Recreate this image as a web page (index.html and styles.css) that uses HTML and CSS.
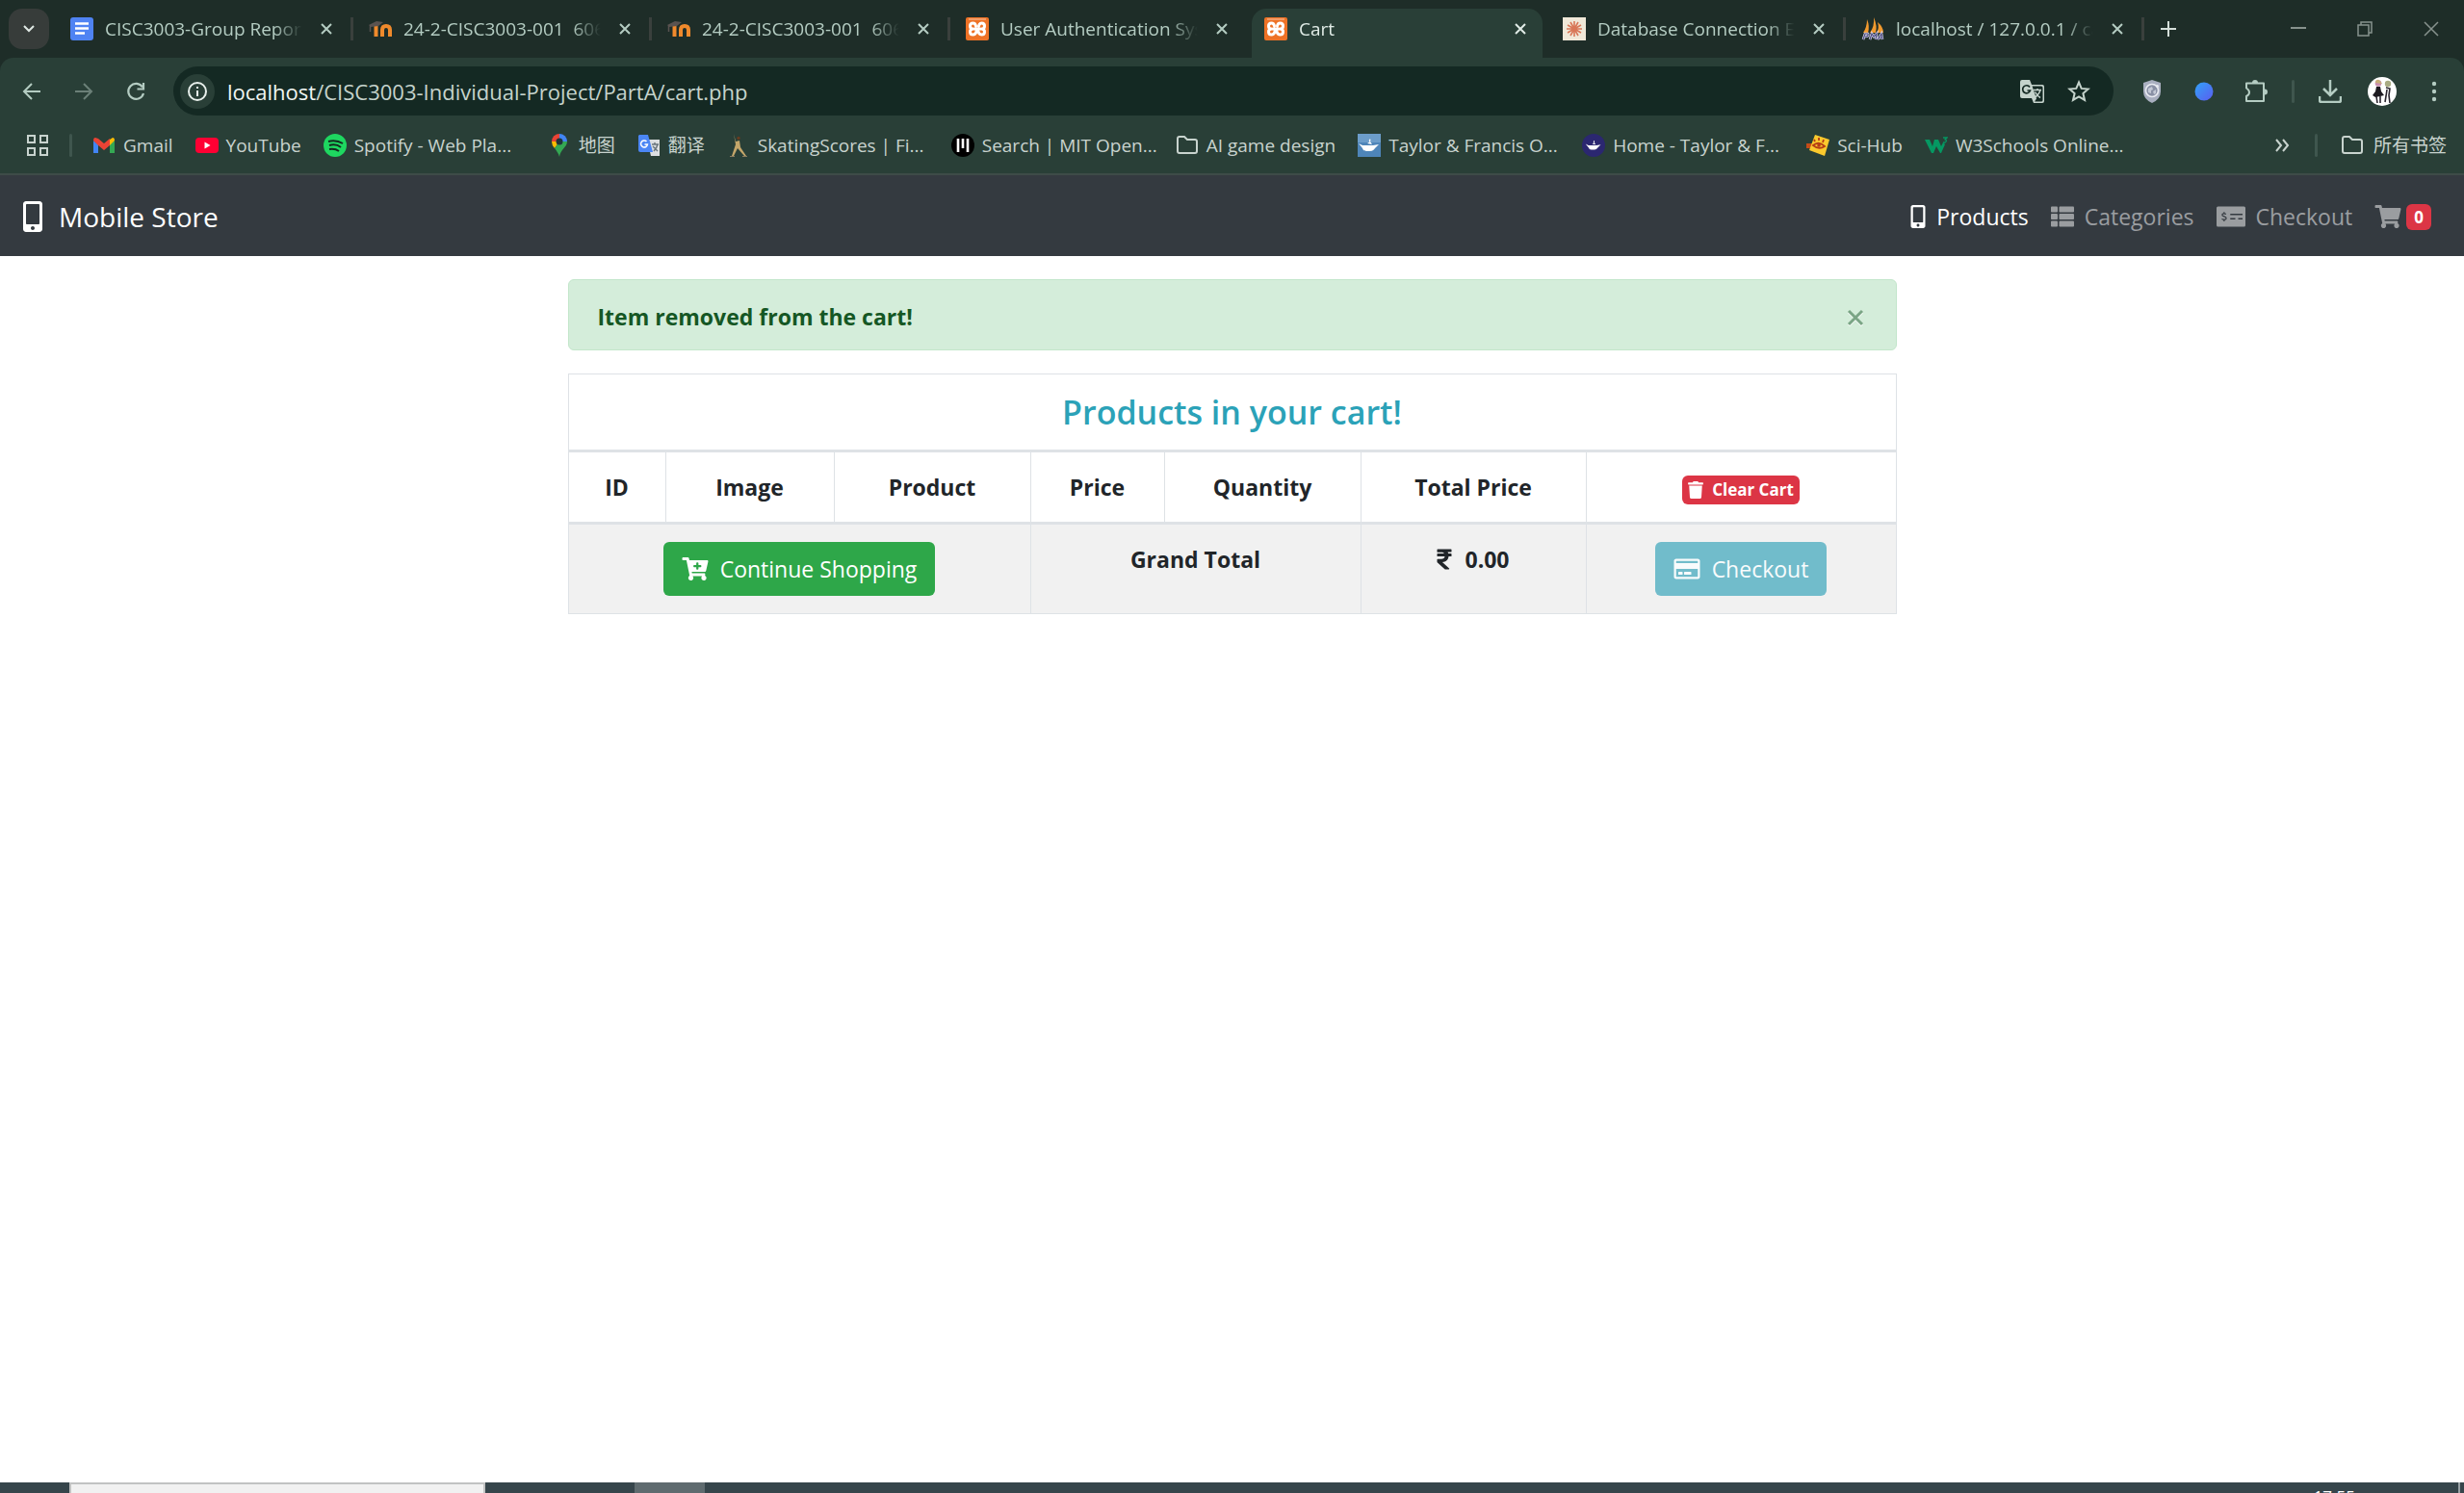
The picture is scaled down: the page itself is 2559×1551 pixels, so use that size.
FILE: index.html
```html
<!DOCTYPE html>
<html lang="en">
<head>
<meta charset="utf-8">
<title>Cart</title>
<link rel="stylesheet" href="styles.css">
</head>
<body>
<svg class="sprite" aria-hidden="true">
  <symbol id="x" viewBox="0 0 14 14"><path d="M2 2l10 10M12 2L2 12" stroke="currentColor" stroke-width="2" fill="none"/></symbol>
  <symbol id="moodle" viewBox="0 0 24 24"><path d="M7.500 20V9M14 20v-7q0-4 4-4t4 4v7" fill="none" stroke="#f08a2c" stroke-width="4"/><path d="M0 8l8-4 7 1-5 4-8 1z" fill="#5a5350"/><path d="M1.500 9v6" stroke="#5a5350" stroke-width="1.500"/></symbol>
  <symbol id="xampp" viewBox="0 0 24 24"><rect width="24" height="24" rx="2" fill="#ee7226"/><path d="M3 2h18" stroke="#fff" stroke-opacity=".6"/><path d="M9 12h6M10.500 9q-.500-3-3-3-3 0-3 3t3 3q-3 0-3 3t3 3q2.500 0 3.500-3 0-2 1-2t1 2q1 3 3.500 3 3 0 3-3t-3-3q3 0 3-3t-3-3q-2.500 0-3 3" fill="none" stroke="#fff" stroke-width="3" stroke-linecap="round" stroke-linejoin="round"/></symbol>
  <symbol id="folder" viewBox="0 0 24 24"><path d="M2 5a2 2 0 0 1 2-2h5l3 3h8a2 2 0 0 1 2 2v10a2 2 0 0 1-2 2H4a2 2 0 0 1-2-2z" fill="none" stroke="currentColor" stroke-width="2"/></symbol>
  <symbol id="mobile" viewBox="0 0 320 512"><path fill="currentColor" d="M272 0H48C21.500 0 0 21.500 0 48v416c0 26.500 21.500 48 48 48h224c26.500 0 48-21.500 48-48V48c0-26.500-21.500-48-48-48zM160 480c-17.700 0-32-14.300-32-32s14.300-32 32-32 32 14.300 32 32-14.300 32-32 32zm112-108c0 6.600-5.400 12-12 12H60c-6.600 0-12-5.400-12-12V60c0-6.600 5.400-12 12-12h200c6.600 0 12 5.400 12 12v312z"/></symbol>
  <symbol id="lamp" viewBox="0 0 24 24"><path d="M1 10l4 2h11l6-1-4 4c-2 3-4 3-7 3s-5 0-6-3zM10 10l3-2 2 3zM12 8q-1-1 1-3 1 2 0 3" fill="#fff"/></symbol>
</svg>

<header class="browser">
  <div class="tabstrip">
    <button class="tab-search" aria-label="Search tabs"><svg width="14" height="14" viewBox="0 0 14 14"><path d="M2 4l5 5 5-5" fill="none" stroke="#dfe8e4" stroke-width="2"/></svg></button>
    <div class="tab">
      <svg class="fav" viewBox="0 0 24 24"><rect width="24" height="24" rx="3" fill="#4f83f3"/><path d="M5 6.500h14M5 11.500h14M5 16.500h10" stroke="#fff" stroke-width="2.500"/></svg>
      <span class="tab-title">CISC3003-Group Report</span><button class="close" aria-label="Close tab"><svg><use href="#x"/></svg></button>
    </div>
    <div class="tab">
      <svg class="fav"><use href="#moodle"/></svg>
      <span class="tab-title">24-2-CISC3003-001&nbsp; 606</span><button class="close" aria-label="Close tab"><svg><use href="#x"/></svg></button>
    </div>
    <div class="tab">
      <svg class="fav"><use href="#moodle"/></svg>
      <span class="tab-title">24-2-CISC3003-001&nbsp; 606</span><button class="close" aria-label="Close tab"><svg><use href="#x"/></svg></button>
    </div>
    <div class="tab no-line">
      <svg class="fav"><use href="#xampp"/></svg>
      <span class="tab-title">User Authentication Sys</span><button class="close" aria-label="Close tab"><svg><use href="#x"/></svg></button>
    </div>
    <div class="tab no-line active">
      <svg class="fav"><use href="#xampp"/></svg>
      <span class="tab-title">Cart</span><button class="close" aria-label="Close tab"><svg><use href="#x"/></svg></button>
    </div>
    <div class="tab">
      <svg class="fav" viewBox="0 0 24 24"><rect width="24" height="24" fill="#f0e8d8"/><path d="M12 4v16M5 8l14 8M5 16l14-8M8 5l8 14M16 5L8 19M4 12h16" stroke="#d97757" stroke-width="1.600"/></svg>
      <span class="tab-title">Database Connection Er</span><button class="close" aria-label="Close tab"><svg><use href="#x"/></svg></button>
    </div>
    <div class="tab">
      <svg class="fav" viewBox="0 0 24 24"><path d="M2 16Q6 10 6 2q3 7 1 14zM9 16q5-7 4-16 4 9 2 16zM16 16q3-5 1-11 6 5 6 11z" fill="#f29a2e"/><path d="M2 23l2-6h3q1 3-3 3M9 23l2-6 2 3 3-3-1 6M17 23l4-6 1 6M18 21h4" fill="none" stroke="#d9d8ee" stroke-width="2.600"/><path d="M2 23l2-6h3q1 3-3 3M9 23l2-6 2 3 3-3-1 6M17 23l4-6 1 6M18 21h4" fill="none" stroke="#4b4a80" stroke-width="1.200"/></svg>
      <span class="tab-title">localhost / 127.0.0.1 / ca</span><button class="close" aria-label="Close tab"><svg><use href="#x"/></svg></button>
    </div>
    <button class="new-tab" aria-label="New tab"><svg width="16" height="16" viewBox="0 0 16 16"><path d="M8 0v16M0 8h16" stroke="#d5dfda" stroke-width="2"/></svg></button>
    <div class="window-controls">
      <button aria-label="Minimize"><svg viewBox="0 0 16 16"><path d="M0 7h16" stroke="currentColor" stroke-width="2"/></svg></button>
      <button aria-label="Restore"><svg viewBox="0 0 16 16"><path d="M1 4h11v11H1zM4 4V1h11v11h-3" fill="none" stroke="currentColor" stroke-width="1.500"/></svg></button>
      <button aria-label="Close"><svg viewBox="0 0 16 16"><path d="M1 1l14 14M15 1L1 15" stroke="currentColor" stroke-width="1.500"/></svg></button>
    </div>
  </div>

  <div class="panel">
    <div class="toolbar">
      <button class="tool" aria-label="Back"><svg viewBox="0 0 24 24"><path d="M21 12H4M12 4l-8 8 8 8" fill="none" stroke="currentColor" stroke-width="2"/></svg></button>
      <button class="tool dim" aria-label="Forward"><svg viewBox="0 0 24 24"><path d="M3 12h17M12 4l8 8-8 8" fill="none" stroke="currentColor" stroke-width="2"/></svg></button>
      <button class="tool" aria-label="Reload"><svg viewBox="0 0 24 24"><path d="M19 7.500A8 8 0 1 0 20 14M20 3v6.500h-6.500" fill="none" stroke="currentColor" stroke-width="2.200"/></svg></button>
      <div class="omnibox">
        <button class="site-info" aria-label="Site information"><svg width="20" height="20" viewBox="0 0 20 20"><circle cx="10" cy="10" r="9" fill="none" stroke="currentColor" stroke-width="2"/><path d="M10 9v6M10 5v2" stroke="currentColor" stroke-width="2"/></svg></button>
        <div class="url"><b>localhost</b>/CISC3003-Individual-Project/PartA/cart.php</div>
        <button class="in-box" aria-label="Translate this page"><svg width="26" height="26" viewBox="0 0 26 26"><path d="M2 1h8l2 5h11a2 2 0 0 1 2 2v15a2 2 0 0 1-2 2h-9l-2-5H2a2 2 0 0 1-2-2V3a2 2 0 0 1 2-2z" fill="#c5d3cc"/><path d="M12.500 7.500H22a1.500 1.500 0 0 1 1.500 1.500v13a1.500 1.500 0 0 1-1.500 1.500h-7l2-3z" fill="#142923"/><path d="M10 8.500A4 4 0 1 0 10.500 12H7.500" fill="none" stroke="#142923" stroke-width="1.700"/><path d="M14 11.500h8M18 10v1.500M21 11.500q-1.500 5-6 8M15.500 13.500q2 4 5.500 6" fill="none" stroke="#c5d3cc" stroke-width="1.500"/></svg></button>
        <button class="in-box" aria-label="Bookmark this tab"><svg width="24" height="24" viewBox="0 0 24 24"><path d="M12 2.500l2.700 6.400 6.900.6-5.200 4.600 1.600 6.800-6-3.600-6 3.600 1.600-6.800-5.200-4.600 6.900-.6z" fill="none" stroke="#c5d3cc" stroke-width="2"/></svg></button>
      </div>
      <div class="extensions">
        <button class="tool" aria-label="Shield extension"><svg viewBox="0 0 24 24"><path d="M12 0l9 3v9q0 8-9 12-9-4-9-12V3z" fill="#a9afc0"/><circle cx="12" cy="11" r="6.500" fill="#8990a5" stroke="#e9ebf1" stroke-width="1.600"/><path d="M8 9l4-2 1 3-2 1v3l-3-1zM13 12l3-2v4l-2 1z" fill="#c3c8d5"/><circle cx="17.500" cy="6.500" r="1.500" fill="#e9ebf1"/></svg></button>
        <button class="tool" aria-label="Blue extension"><svg viewBox="0 0 24 24"><defs><linearGradient id="orb" x1="0" y1="0" x2="1" y2="1"><stop stop-color="#31a2f8"/><stop offset="1" stop-color="#5b5df0"/></linearGradient></defs><circle cx="12" cy="12" r="9.500" fill="url(#orb)"/></svg></button>
        <button class="tool" aria-label="Extensions"><svg viewBox="0 0 24 24"><path d="M2 3.500h18V22H2v-5q3-1.500 3-4T2 8.500z" fill="none" stroke="currentColor" stroke-width="2" stroke-linejoin="round"/><path d="M8 3a3 3 0 0 1 6 0zM21 9.500a3 3 0 0 1 0 6z" fill="currentColor"/></svg></button>
        <span class="rule"></span>
        <button class="tool" aria-label="Downloads"><svg viewBox="0 0 24 24"><path d="M12 0v15M5 9l7 7 7-7M1 17v4q0 2 2 2h18q2 0 2-2v-4" fill="none" stroke="currentColor" stroke-width="2.500"/></svg></button>
        <button class="tool avatar" aria-label="Profile"><svg viewBox="0 0 30 30"><circle cx="15" cy="15" r="15" fill="#fff"/><circle cx="11" cy="6.500" r="3.300" fill="#c98fb0"/><path d="M8 6q0-4 4-3l3 4" fill="#c9b07a"/><circle cx="21" cy="7" r="3.200" fill="#a9ab83"/><path d="M9 10h4l1 5 3 4-4 1-5 1-3-2 3-4z" fill="#1d1a20"/><path d="M9 20l1 7M13 20v7M19 11l4 1-1 7 1 8M20 13l-1 7-1 6" fill="none" stroke="#29242e" stroke-width="1.600"/></svg></button>
        <button class="tool" aria-label="Menu"><svg viewBox="0 0 24 24"><g fill="currentColor"><circle cx="12" cy="4" r="2.200"/><circle cx="12" cy="12" r="2.200"/><circle cx="12" cy="20" r="2.200"/></g></svg></button>
      </div>
    </div>

    <nav class="bookmarks" aria-label="Bookmarks">
      <button class="apps" aria-label="Apps"><svg width="24" height="24" viewBox="0 0 24 24"><path d="M2 2h7v7H2zM15 2h7v7h-7zM2 15h7v7H2zM15 15h7v7h-7z" fill="none" stroke="currentColor" stroke-width="2"/></svg></button>
      <span class="rule"></span>
      <a href="#"><svg viewBox="0 0 24 24"><path d="M1 7v13h5V11z" fill="#4285f4"/><path d="M23 7v13h-5V11z" fill="#34a853"/><path d="M18 6l3-2q2 0 2 3l-5 5z" fill="#fbbc04"/><path d="M1 7q0-3 2-3l3 1 6 5 6-5v7l-6 5-6-5z" fill="#ea4335"/></svg><span>Gmail</span></a>
      <a href="#"><svg viewBox="0 0 24 24"><rect y="4" width="24" height="16" rx="4" fill="#ff0033"/><path d="M9.500 8.500v7l6-3.500z" fill="#fff"/></svg><span>YouTube</span></a>
      <a href="#"><svg viewBox="0 0 24 24"><circle cx="12" cy="12" r="12" fill="#1ed760"/><path d="M5 8q8-2 15 2M6 12q7-2 12 2M6 16q6-1 10 2" fill="none" stroke="#14291f" stroke-width="2"/></svg><span class="long">Spotify - Web Pla...</span></a>
      <a href="#"><svg viewBox="0 0 24 24"><path d="M12 0a8 8 0 0 0-8 8h8z" fill="#ea4335"/><path d="M12 0a8 8 0 0 1 8 8h-8z" fill="#4285f4"/><path d="M4 8q0 4 3 7l5-7z" fill="#fbbc04"/><path d="M20 8c0 6-7 8-8 16-1-4-3-6-5-9l5-7z" fill="#34a853"/><circle cx="12" cy="8" r="3.500" fill="#20353b"/></svg><span>地图</span></a>
      <a href="#"><svg viewBox="0 0 24 24"><path d="M10 6h13v17H14z" fill="#dcdfe1"/><path d="M2 1h9l5 18H3q-2 0-2-2V2z" fill="#4b86f4"/><path d="M9.500 8A3.500 3.500 0 1 0 10.500 11H7.500" fill="none" stroke="#fff" stroke-width="1.500"/><path d="M15 11h7M18 9v2M21 11q-1 4-4 7M16 13l5 5" fill="none" stroke="#68757c" stroke-width="1.400"/></svg><span>翻译</span></a>
      <a href="#"><svg viewBox="0 0 24 24"><path d="M7 0l2 8 4-1 1 7 6 9-2 0-7-8-4 8-2 0 4-12z" fill="#c4a66a"/><circle cx="12" cy="4.500" r="1.700" fill="#673c20"/><path d="M3 23.500h5M16 23.500h5" stroke="#8b7c60" stroke-width="1.200"/></svg><span class="long">SkatingScores | Fi...</span></a>
      <a href="#"><svg viewBox="0 0 24 24"><circle cx="12" cy="12" r="12" fill="#000"/><path d="M7 5v14M12 5v10M17 5v14" stroke="#fff" stroke-width="2.600"/></svg><span class="long">Search | MIT Open...</span></a>
      <a href="#"><svg><use href="#folder"/></svg><span>AI game design</span></a>
      <a href="#"><svg viewBox="0 0 24 24"><path d="M0 0h24v24H0z" fill="#4e85b9"/><path d="M0 0h24v9H0z" fill="#6c9dca"/><use href="#lamp"/></svg><span class="long">Taylor &amp; Francis O...</span></a>
      <a href="#"><svg viewBox="0 0 24 24"><circle cx="12" cy="12" r="12" fill="#2b2770"/><use href="#lamp" x="3" y="3" width="18" height="18"/></svg><span class="long">Home - Taylor &amp; F...</span></a>
      <a href="#"><svg viewBox="0 0 24 24"><path d="M0 10h6v5H0z" fill="#c44c18"/><path d="M9 1l15 5-5 17-16-6z" fill="#fbc92d"/><path d="M7 12q6-5 12 1-6 4-12-1zM9 8l-1-2M13 7V4M17 9l1-3" fill="none" stroke="#b43c16" stroke-width="1.800"/><circle cx="13" cy="12" r="1.800" fill="#b43c16"/></svg><span>Sci-Hub</span></a>
      <a href="#"><svg viewBox="0 0 24 24"><path d="M0 6h5l3 7 2-7h4l3 7 2-4 2 2-4 9h-1l-4-7-3 7H7z" fill="#059862"/><path d="M19 4h4l-2 2q3 1 0 3h-2" fill="none" stroke="#059862" stroke-width="1.300"/></svg><span class="long">W3Schools Online...</span></a>
      <div class="bookmarks-end">
        <button aria-label="More bookmarks"><svg width="16" height="16" viewBox="0 0 16 16"><path d="M2 2l5 6-5 6M9 2l5 6-5 6" fill="none" stroke="currentColor" stroke-width="2"/></svg></button>
        <span class="rule"></span>
        <a href="#"><svg><use href="#folder"/></svg><span>所有书签</span></a>
      </div>
    </nav>
  </div>
</header>

<nav class="navbar" aria-label="Main">
  <a class="brand" href="#"><svg width="20" height="32"><use href="#mobile"/></svg>Mobile Store</a>
  <ul class="nav-links">
    <li><a class="current" href="#"><svg width="16" height="24"><use href="#mobile"/></svg>Products</a></li>
    <li><a href="#"><svg width="24" height="24" viewBox="0 0 512 512"><path fill="currentColor" d="M149.333 216v80c0 13.255-10.745 24-24 24H24c-13.255 0-24-10.745-24-24v-80c0-13.255 10.745-24 24-24h101.333c13.255 0 24 10.745 24 24zM0 376v80c0 13.255 10.745 24 24 24h101.333c13.255 0 24-10.745 24-24v-80c0-13.255-10.745-24-24-24H24c-13.255 0-24 10.745-24 24zM125.333 32H24C10.745 32 0 42.745 0 56v80c0 13.255 10.745 24 24 24h101.333c13.255 0 24-10.745 24-24V56c0-13.255-10.745-24-24-24zm80 448H488c13.255 0 24-10.745 24-24v-80c0-13.255-10.745-24-24-24H205.333c-13.255 0-24 10.745-24 24v80c0 13.255 10.745 24 24 24zm-24-424v80c0 13.255 10.745 24 24 24H488c13.255 0 24-10.745 24-24V56c0-13.255-10.745-24-24-24H205.333c-13.255 0-24 10.745-24 24zm24 264H488c13.255 0 24-10.745 24-24v-80c0-13.255-10.745-24-24-24H205.333c-13.255 0-24 10.745-24 24v80c0 13.255 10.745 24 24 24z"/></svg>Categories</a></li>
    <li><a href="#"><svg width="30" height="24" viewBox="0 0 640 512"><rect y="32" width="640" height="448" rx="32" fill="currentColor"/><path d="M304 208h272M304 304h112M480 304h96" stroke="#343a40" stroke-width="32"/><path d="M208 204c-14-20-84-22-84 14 0 46 92 24 92 74 0 42-80 38-98 12M168 152v40M168 320v40" fill="none" stroke="#343a40" stroke-width="26"/></svg>Checkout</a></li>
    <li><a class="cart-link" href="#" aria-label="Cart"><svg width="28" height="24" viewBox="0 0 576 512"><path fill="currentColor" d="M528.12 301.319l47.273-208C578.806 78.301 567.391 64 551.99 64H159.208l-9.166-44.81C147.758 8.021 137.93 0 126.529 0H24C10.745 0 0 10.745 0 24v16c0 13.255 10.745 24 24 24h69.883l70.248 343.435C147.325 417.1 136 435.222 136 456c0 30.928 25.072 56 56 56s56-25.072 56-56c0-15.674-6.447-29.835-16.824-40h209.647C430.447 426.165 424 440.326 424 456c0 30.928 25.072 56 56 56s56-25.072 56-56c0-22.172-12.888-41.332-31.579-50.405l5.517-24.276c3.413-15.018-8.002-29.319-23.403-29.319H218.117l-6.545-32h293.145c11.206 0 20.92-7.754 23.403-18.681z"/></svg><span class="count">0</span></a></li>
  </ul>
</nav>

<main class="container">
  <div class="alert" role="alert"><strong>Item removed from the cart!</strong><button class="dismiss" aria-label="Dismiss"><svg width="18" height="18" viewBox="0 0 18 18"><path d="M2 3l14 14M16 3L2 17" stroke="#fff" stroke-width="3"/><path d="M2 2l14 14M16 2L2 16" stroke="currentColor" stroke-width="3"/></svg></button></div>
  <table class="cart">
    <colgroup><col class="c-id"><col class="c-image"><col class="c-product"><col class="c-price"><col class="c-qty"><col class="c-total"><col></colgroup>
    <thead>
      <tr><td class="title-cell" colspan="7"><h1>Products in your cart!</h1></td></tr>
      <tr><th>ID</th><th>Image</th><th>Product</th><th>Price</th><th>Quantity</th><th>Total Price</th><th><a class="clear" href="#"><svg width="16" height="18" viewBox="0 0 448 512"><path fill="currentColor" d="M432 32H312l-9.400-18.700A24 24 0 0 0 281.100 0H166.800a23.720 23.720 0 0 0-21.400 13.300L136 32H16A16 16 0 0 0 0 48v32a16 16 0 0 0 16 16h416a16 16 0 0 0 16-16V48a16 16 0 0 0-16-16zM53.200 467a48 48 0 0 0 47.900 45h245.800a48 48 0 0 0 47.900-45L416 128H32z"/></svg>Clear Cart</a></th></tr>
    </thead>
    <tbody>
      <tr>
        <td colspan="3"><a class="btn btn-success" href="#"><svg width="28" height="24" viewBox="0 0 576 512"><path fill="currentColor" d="M504.717 320H211.572l6.545 32h268.418c15.401 0 26.816 14.301 23.403 29.319l-5.517 24.276C523.112 414.668 536 433.828 536 456c0 31.202-25.519 56.444-56.824 55.994-29.823-.429-54.35-24.631-55.155-54.447-.44-16.287 6.085-31.049 16.803-41.548H231.176C241.553 426.165 248 440.326 248 456c0 31.813-26.528 57.431-58.67 55.938-28.54-1.325-51.751-24.385-53.251-52.917-1.158-22.034 10.436-41.455 28.051-51.586L93.883 64H24C10.745 64 0 53.255 0 40V24C0 10.745 10.745 0 24 0h102.529c11.401 0 21.228 8.021 23.513 19.190L159.208 64H551.990c15.401 0 26.816 14.301 23.403 29.319l-47.273 208C525.637 312.246 515.923 320 504.717 320zM408 168h-48v-40c0-8.837-7.163-16-16-16h-16c-8.837 0-16 7.163-16 16v40h-48c-8.837 0-16 7.163-16 16v16c0 8.837 7.163 16 16 16h48v40c0 8.837 7.163 16 16 16h16c8.837 0 16-7.163 16-16v-40h48c8.837 0 16-7.163 16-16v-16c0-8.837-7.163-16-16-16z"/></svg>Continue Shopping</a></td>
        <td colspan="2"><b>Grand Total</b></td>
        <td><b class="amount"><svg width="16" height="24" viewBox="0 0 320 512"><path fill="currentColor" d="M308 96c6.627 0 12-5.373 12-12V44c0-6.627-5.373-12-12-12H12C5.373 32 0 37.373 0 44v44.748c0 6.627 5.373 12 12 12h85.280c27.308 0 48.261 9.958 60.970 27.252H12c-6.627 0-12 5.373-12 12v40c0 6.627 5.373 12 12 12h158.757c-6.217 36.086-32.961 58.632-74.757 58.632H12c-6.627 0-12 5.373-12 12v53.012c0 3.349 1.400 6.546 3.861 8.818l165.052 152.356a12.001 12.001 0 0 0 8.139 3.182h82.562c10.924 0 16.166-13.408 8.139-20.818L116.871 319.906c76.499-2.340 131.144-53.395 138.318-127.906H308c6.627 0 12-5.373 12-12v-40c0-6.627-5.373-12-12-12h-58.690c-3.486-11.541-8.280-22.246-14.252-32H308z"/></svg>0.00</b></td>
        <td><a class="btn btn-info" href="#" aria-disabled="true"><svg width="28" height="24" viewBox="0 0 576 512"><path fill="currentColor" d="M527.900 32H48.100C21.500 32 0 53.500 0 80v352c0 26.500 21.500 48 48.100 48h479.800c26.600 0 48.100-21.500 48.100-48V80c0-26.500-21.500-48-48.100-48zM54.100 80h467.800c3.300 0 6 2.700 6 6v42H48.100V86c0-3.300 2.700-6 6-6zm467.800 352H54.100c-3.300 0-6-2.700-6-6V256h479.800v170c0 3.300-2.700 6-6 6zM192 332v40c0 6.600-5.400 12-12 12h-72c-6.600 0-12-5.400-12-12v-40c0-6.600 5.400-12 12-12h72c6.600 0 12 5.400 12 12zm192 0v40c0 6.600-5.400 12-12 12H236c-6.600 0-12-5.400-12-12v-40c0-6.600 5.400-12 12-12h136c6.600 0 12 5.400 12 12z"/></svg>Checkout</a></td>
      </tr>
    </tbody>
  </table>
</main>

<footer class="taskbar">
  <span class="task-search"></span>
  <span class="task-active"></span>
  <time class="clock">17:55</time>
  <span class="show-desktop"></span>
</footer>
</body>
</html>
```
FILE: styles.css
```css
* { box-sizing: border-box; }

body {
  margin: 0;
  height: 100vh;
  display: flex;
  flex-direction: column;
  overflow: hidden;
  background: #fff;
  color: #212529;
  font: 23px/36px "Open Sans", "Noto Sans CJK SC", sans-serif;
}

a { color: inherit; text-decoration: none; }
button { border: 0; padding: 0; background: none; color: inherit; font: inherit; display: grid; place-items: center; }
svg { display: block; flex: none; }
.sprite { position: absolute; width: 0; height: 0; }
.rule { width: 3px; height: 24px; border-radius: 2px; background: #3f564e; }

/* Browser tabs */
.browser { flex: none; background: #1e2d28; color: #b4ccc2; font-size: 19px; }
.tabstrip { display: flex; height: 60px; align-items: center; }
.tab-search { width: 42px; height: 42px; margin: 0 6px 0 9px; border-radius: 14px; background: #373c3a; }
.tab { position: relative; flex: 0 1 310px; min-width: 0; height: 60px; padding: 0 21px 0 16px; display: flex; align-items: center; }
.tab::after { content: ""; position: absolute; right: 0; top: 18px; width: 3px; height: 24px; background: #3a403d; }
.tab.no-line::after { display: none; }
.fav { width: 24px; height: 24px; margin-right: 12px; }
.tab-title { flex: 1; min-width: 0; overflow: hidden; white-space: nowrap; margin-right: 14px; -webkit-mask-image: linear-gradient(to right, #000 84%, transparent 98%); mask-image: linear-gradient(to right, #000 84%, transparent 98%); }
.close svg { width: 14px; height: 14px; }
.active { color: #e0ebe6; isolation: isolate; }
.active::before { content: ""; position: absolute; z-index: -1; left: 3px; right: 5px; top: 9px; bottom: 0; border-radius: 15px 15px 0 0; background: #293f37; }
.new-tab { width: 50px; height: 42px; }
.window-controls { margin-left: auto; display: flex; color: #87928d; }
.window-controls button { width: 69px; height: 42px; }
.window-controls svg { width: 16px; height: 16px; }

/* Address bar */
.panel { background: #293f37; border-radius: 14px 14px 0 0; border-bottom: 2px solid #3e4c48; }
.toolbar { display: flex; align-items: center; height: 69px; padding: 0 4px 0 6px; }
.tool { width: 54px; height: 42px; }
.tool svg { width: 24px; height: 24px; }
.dim { color: #6b8078; }
.omnibox { flex: 1; display: flex; align-items: center; height: 51px; margin-left: 12px; padding: 0 12px 0 7px; border-radius: 26px; background: #142923; color: #c5d3cc; }
.site-info { width: 36px; height: 36px; border-radius: 50%; background: #293f37; color: #e8f0ec; }
.url { flex: 1; margin-left: 13px; font-size: 22px; }
.url b { font-weight: 400; color: #f0f6f3; }
.in-box { width: 48px; height: 42px; }
.extensions { display: flex; align-items: center; padding-left: 13px; }
.extensions .rule { margin: 0 10px; }
.tool.avatar svg { width: 30px; height: 30px; }

/* Bookmarks */
.bookmarks { display: flex; align-items: center; height: 51px; padding: 0 18px 8px 27px; color: #c8d3ce; font-size: 19px; white-space: nowrap; }
.bookmarks .rule { margin: 0 21px; }
.bookmarks a { display: flex; align-items: center; gap: 8px; margin-right: 23px; }
.bookmarks a svg { width: 24px; height: 24px; }
.long { width: 178px; }
.bookmarks .bookmarks-end { margin-left: auto; display: flex; align-items: center; }
.bookmarks .bookmarks-end a { margin: 0; gap: 10px; }
.bookmarks .bookmarks-end .rule { margin: 0 24px 0 26px; }

/* Site navigation */
.navbar { flex: none; display: flex; align-items: center; justify-content: space-between; height: 84px; padding: 2px 34px 0 24px; background: #343a40; color: #fff; }
.brand { display: flex; align-items: center; gap: 17px; font-size: 28px; }
.nav-links { display: flex; align-items: center; gap: 23px; margin: 0; padding: 0; list-style: none; color: #9a9da0; }
.nav-links a { display: flex; align-items: center; gap: 11px; }
.nav-links .current { color: #fff; }
.nav-links .cart-link { gap: 5px; }
.count { padding: 0 8px; border-radius: 6px; background: #dc3545; color: #fff; font-size: 17px; font-weight: 700; line-height: 27px; }

/* Cart */
.container { flex: 1; width: 1380px; max-width: 100%; margin: 0 auto; padding-top: 24px; }
.alert { display: flex; align-items: center; justify-content: space-between; height: 74px; margin-bottom: 24px; padding: 3px 33px 0 30px; border: 1px solid #c3e6cb; border-radius: 6px; background: #d4edda; color: #155724; }
.dismiss { padding-top: 3px; color: #7aa585; }
.cart { width: 100%; table-layout: fixed; border-collapse: collapse; text-align: center; }
.cart th, .cart td { padding: 18px; border: 1px solid #dee2e6; vertical-align: top; }
.cart thead th, .cart thead td { border-bottom: 3px solid #dee2e6; }
.cart tbody { background: #f1f1f1; }
.c-id { width: 101px; }
.c-image { width: 175px; }
.c-product { width: 204px; }
.c-price { width: 139px; }
.c-qty { width: 204px; }
.c-total { width: 234px; }
h1 { margin: 0; color: #2ba2b8; font-size: 34px; font-weight: 600; line-height: 42px; }
.clear { display: inline-flex; align-items: center; gap: 9px; height: 30px; padding: 0 6px; border-radius: 6px; background: #dc3545; color: #fff; font-size: 17px; vertical-align: middle; }
.btn { display: inline-flex; align-items: center; gap: 12px; height: 56px; padding: 0 19px; border-radius: 6px; color: #fff; vertical-align: top; }
.btn-success { background: #2ea749; }
.btn-info { background: #71bccb; color: #f8fbfc; }
.amount { display: inline-flex; align-items: center; gap: 13px; }

/* Taskbar */
.taskbar { flex: none; display: flex; height: 11px; overflow: hidden; padding: 0 4px 0 72px; background: #36454b; color: #fff; font-size: 17px; line-height: 24px; }
.task-search { width: 432px; background: #f1f1f1; border: 2px solid #c1c2c2; border-bottom: 0; }
.task-active { width: 73px; margin-left: 155px; background: #5f6b6f; }
.clock { margin: 3px 107px 0 auto; }
.show-desktop { width: 2px; background: #98a1a5; }
```
